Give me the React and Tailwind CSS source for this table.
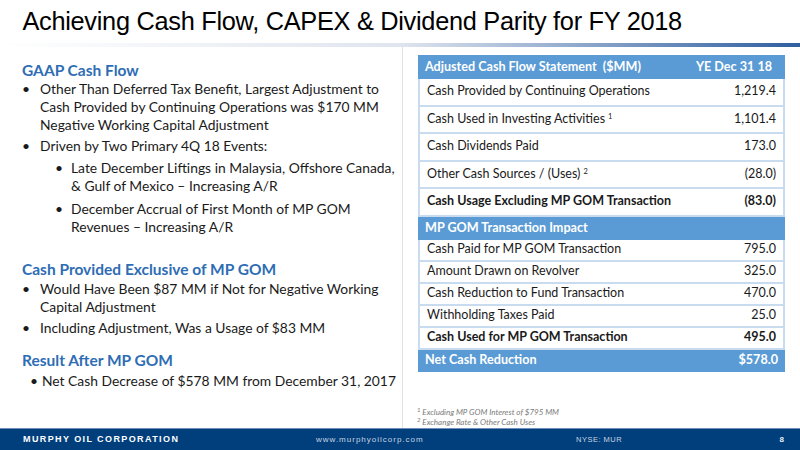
const body = "font-['Lato','Open_Sans',sans-serif]";

const topRows = [
  { label: 'Cash Provided by Continuing Operations', value: '1,219.4' },
  { label: 'Cash Used in Investing Activities', sup: '1', value: '1,101.4' },
  { label: 'Cash Dividends Paid', value: '173.0' },
  { label: 'Other Cash Sources / (Uses)', sup: '2', value: '(28.0)' },
];

const gomRows = [
  { label: 'Cash Paid for MP GOM Transaction', value: '795.0' },
  { label: 'Amount Drawn on Revolver', value: '325.0' },
  { label: 'Cash Reduction to Fund Transaction', value: '470.0' },
  { label: 'Withholding Taxes Paid', value: '25.0' },
];

function Row({ label, sup, value, bold, tall }) {
  return (
    <div
      className={`flex items-center justify-between px-[7px] border-x-2 border-b-2 border-[#c8dbef] text-[12.5px] text-[#1a1a1a] ${
        tall ? 'h-[27.5px]' : 'h-[22px]'
      } ${bold ? 'font-bold' : ''}`}
    >
      <span>
        {label}
        {sup && <sup className="text-[7.5px] ml-[3px]">{sup}</sup>}
      </span>
      <span>{value}</span>
    </div>
  );
}

function Bullet({ children, sub, className = '' }) {
  return (
    <div className={`flex ${sub ? 'pl-[33px]' : ''} ${className}`}>
      <span className={`${sub ? 'w-[16px]' : 'w-[18px]'} shrink-0`}>•</span>
      <span>{children}</span>
    </div>
  );
}

export default function App() {
  return (
    <div className="w-[800px] h-[450px] bg-white flex flex-col overflow-hidden">
      <h1 className="h-[43px] pl-[23px] pt-[6px] text-[26px] leading-[30px] text-black font-['Liberation_Sans',Arial,sans-serif] tracking-[-0.3px] scale-x-[0.975] origin-left">
        Achieving Cash Flow, CAPEX &amp; Dividend Parity for FY 2018
      </h1>
      <div className="h-[4px] bg-gradient-to-r from-white via-[#dfe5ee] to-[#2f5f9f]" />

      <div className="flex flex-1 min-h-0">
        <div className={`w-[403px] border-r border-[#e2e2e2] pl-[22px] pt-[14px] text-[13.85px] leading-[18px] text-[#1a1a1a] ${body}`}>
          <h2 className="text-[15.5px] font-bold text-[#2e6db4]">GAAP Cash Flow</h2>
          <Bullet className="mt-[1px]">
            Other Than Deferred Tax Benefit, Largest Adjustment to Cash Provided by Continuing Operations was $170 MM Negative Working Capital Adjustment
          </Bullet>
          <Bullet className="mt-[3px]">Driven by Two Primary 4Q 18 Events:</Bullet>
          <Bullet sub className="mt-[4px]">
            Late December Liftings in Malaysia, Offshore Canada, &amp; Gulf of Mexico – Increasing A/R
          </Bullet>
          <Bullet sub className="mt-[5px]">
            December Accrual of First Month of MP GOM Revenues – Increasing A/R
          </Bullet>

          <h2 className="mt-[24px] text-[15.5px] font-bold text-[#2e6db4]">Cash Provided Exclusive of MP GOM</h2>
          <Bullet className="mt-[2px] pr-[20px]">
            Would Have Been $87 MM if Not for Negative Working Capital Adjustment
          </Bullet>
          <Bullet className="mt-[3px]">Including Adjustment, Was a Usage of $83 MM</Bullet>

          <h2 className="mt-[14px] text-[15.5px] font-bold text-[#2e6db4]">Result After MP GOM</h2>
          <div className="mt-[3px] flex pl-[8px]">
            <span className="w-[12px] shrink-0">•</span>
            <span>Net Cash Decrease of $578 MM from December 31, 2017</span>
          </div>
        </div>

        <div className={`flex-1 flex flex-col pl-[15px] pr-[15px] pt-[8px] ${body}`}>
          <div className="flex items-center justify-between h-[24px] bg-[#5b9bd5] pl-[7px] pr-[13px] text-[12.6px] font-bold text-white">
            <span>Adjusted Cash Flow Statement&nbsp; ($MM)</span>
            <span>YE Dec 31 18</span>
          </div>
          {topRows.map((r) => (
            <Row key={r.label} {...r} tall />
          ))}
          <Row label="Cash Usage Excluding MP GOM Transaction" value="(83.0)" bold tall />
          <div className="flex items-center h-[23px] bg-[#5b9bd5] px-[7px] text-[12.6px] font-bold text-white">
            MP GOM Transaction Impact
          </div>
          {gomRows.map((r) => (
            <Row key={r.label} {...r} />
          ))}
          <Row label="Cash Used for MP GOM Transaction" value="495.0" bold />
          <div className="flex items-center justify-between h-[22px] bg-[#5b9bd5] px-[7px] text-[12.6px] font-bold text-white">
            <span>Net Cash Reduction</span>
            <span>$578.0</span>
          </div>

          <div className="mt-auto pb-[1px] -ml-[1px] text-[8px] leading-[10px] italic text-[#7a7a7a]">
            <div>
              <sup>1</sup> Excluding MP GOM Interest of $795 MM
            </div>
            <div>
              <sup>2</sup> Exchange Rate &amp; Other Cash Uses
            </div>
          </div>
        </div>
      </div>

      <div className="h-[22px] shrink-0 bg-[#003f7c] border-t border-[#6c8fbd] flex items-center font-['Liberation_Sans',Arial,sans-serif]">
        <span className="w-[316px] pl-[23px] text-[9px] font-bold tracking-[1.4px] text-white">MURPHY OIL CORPORATION</span>
        <span className="w-[260px] text-[8px] tracking-[1px] text-[#c9d3e0]">www.murphyoilcorp.com</span>
        <span className="flex-1 text-[7.5px] tracking-[0.5px] text-[#c9d3e0]">NYSE: MUR</span>
        <span className="pr-[16px] text-[8px] font-bold text-[#e8eef6]">8</span>
      </div>
    </div>
  );
}
